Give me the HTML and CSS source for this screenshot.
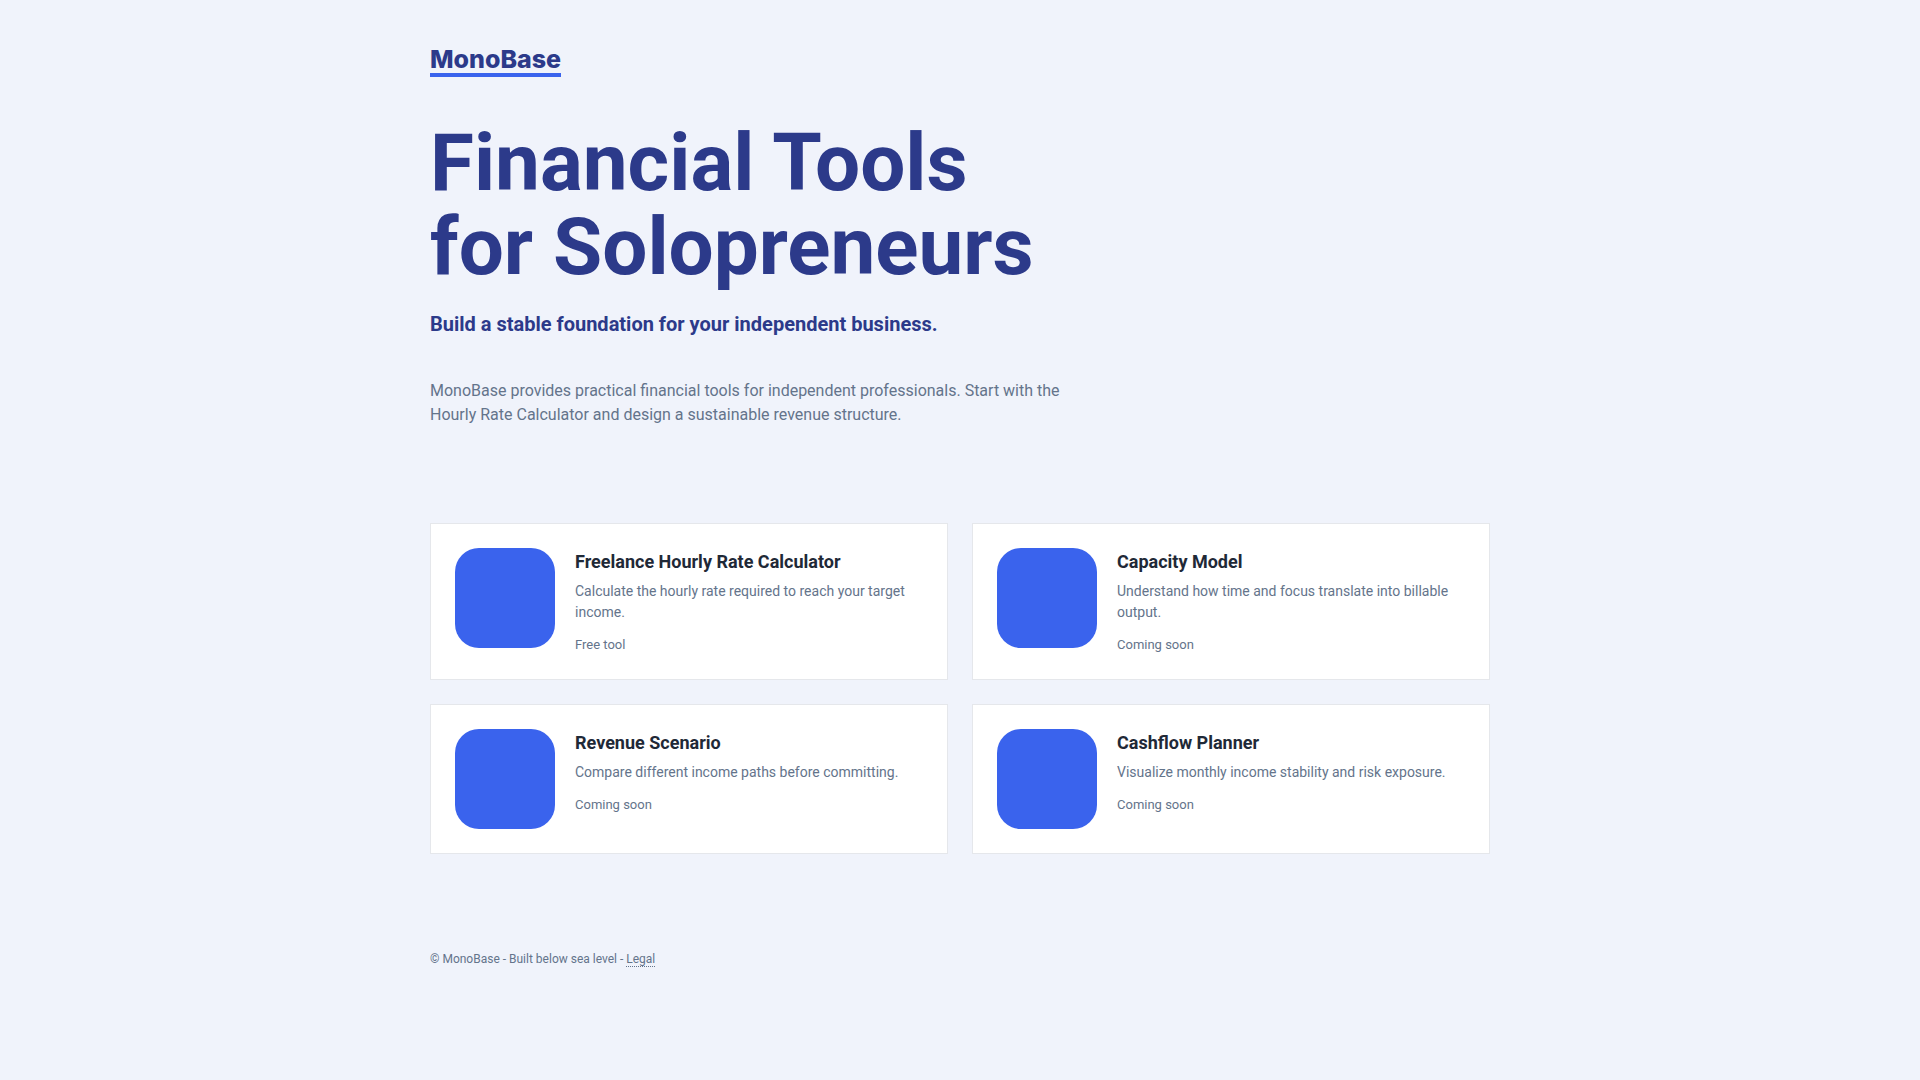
FILE: index.html
```html
<!DOCTYPE html>
<html lang="en">
<head>
    <meta charset="UTF-8">
    <meta name="viewport" content="width=device-width, initial-scale=1.0">
    <title>MonoBase - Financial Tools for Solopreneurs</title>
    <link rel="stylesheet" href="styles.css">
</head>
<body>
    <div class="container">
        <header class="site-header">
            <a class="logo" href="#">MonoBase</a>
        </header>
        <main>
            <section class="hero">
                <h1>Financial Tools<br>for Solopreneurs</h1>
                <p class="subtitle">Build a stable foundation for your independent business.</p>
                <p class="intro">MonoBase provides practical financial tools for independent professionals. Start with the Hourly Rate Calculator and design a sustainable revenue structure.</p>
            </section>
            <section class="tools">
                <a class="card" href="#">
                    <div class="card-icon"></div>
                    <div class="card-body">
                        <h2>Freelance Hourly Rate Calculator</h2>
                        <p class="card-text">Calculate the hourly rate required to reach your target income.</p>
                        <p class="card-status">Free tool</p>
                    </div>
                </a>
                <div class="card">
                    <div class="card-icon"></div>
                    <div class="card-body">
                        <h2>Capacity Model</h2>
                        <p class="card-text">Understand how time and focus translate into billable output.</p>
                        <p class="card-status">Coming soon</p>
                    </div>
                </div>
                <div class="card">
                    <div class="card-icon"></div>
                    <div class="card-body">
                        <h2>Revenue Scenario</h2>
                        <p class="card-text">Compare different income paths before committing.</p>
                        <p class="card-status">Coming soon</p>
                    </div>
                </div>
                <div class="card">
                    <div class="card-icon"></div>
                    <div class="card-body">
                        <h2>Cashflow Planner</h2>
                        <p class="card-text">Visualize monthly income stability and risk exposure.</p>
                        <p class="card-status">Coming soon</p>
                    </div>
                </div>
            </section>
        </main>
        <footer class="site-footer">
            © MonoBase - Built below sea level - <a href="#">Legal</a>
        </footer>
    </div>
</body>
</html>
```

FILE: styles.css
```css
* {
    box-sizing: border-box;
}
body {
    margin: 0;
    background: #f0f3fb;
    color: #64748b;
    font-family: Roboto, sans-serif;
    line-height: 1.5;
}
h1, h2, p {
    margin: 0;
}
.container {
    max-width: 1108px;
    margin: 0 auto;
    padding: 48px 24px;
}
.site-header {
    display: flex;
    margin-bottom: 44px;
}
.logo {
    padding-bottom: 3px;
    border-bottom: 4px solid #3a63ed;
    color: #2c3a8a;
    font-family: Inter, sans-serif;
    font-size: 25px;
    font-weight: 800;
    line-height: 22px;
    text-decoration: none;
}
.hero h1 {
    color: #2c3a8a;
    font-size: 80px;
    font-weight: 700;
    line-height: 84px;
}
.subtitle {
    margin-top: 20px;
    color: #2c3a8a;
    font-size: 20px;
    font-weight: 700;
}
.intro {
    max-width: 640px;
    margin-top: 40px;
    font-size: 16px;
    line-height: 24px;
}
.tools {
    display: grid;
    grid-template-columns: 1fr 1fr;
    gap: 24px;
    margin-top: 96px;
}
.card {
    display: flex;
    gap: 20px;
    padding: 24px;
    background: #fff;
    border: 1px solid #e5e7eb;
    color: inherit;
    text-decoration: none;
}
.card-icon {
    flex: none;
    width: 100px;
    height: 100px;
    border-radius: 24px;
    background: #3a63ed;
}
.card h2 {
    color: #1f2937;
    font-size: 18px;
    font-weight: 700;
    line-height: 27px;
}
.card-text {
    margin-top: 6px;
    font-size: 14px;
    line-height: 21px;
}
.card-status {
    margin-top: 12px;
    font-size: 13px;
    line-height: 20px;
}
.site-footer {
    margin-top: 96px;
    font-size: 12px;
    line-height: 18px;
}
.site-footer a {
    color: inherit;
    text-decoration: none;
    border-bottom: 1px dotted #64748b;
}
```
